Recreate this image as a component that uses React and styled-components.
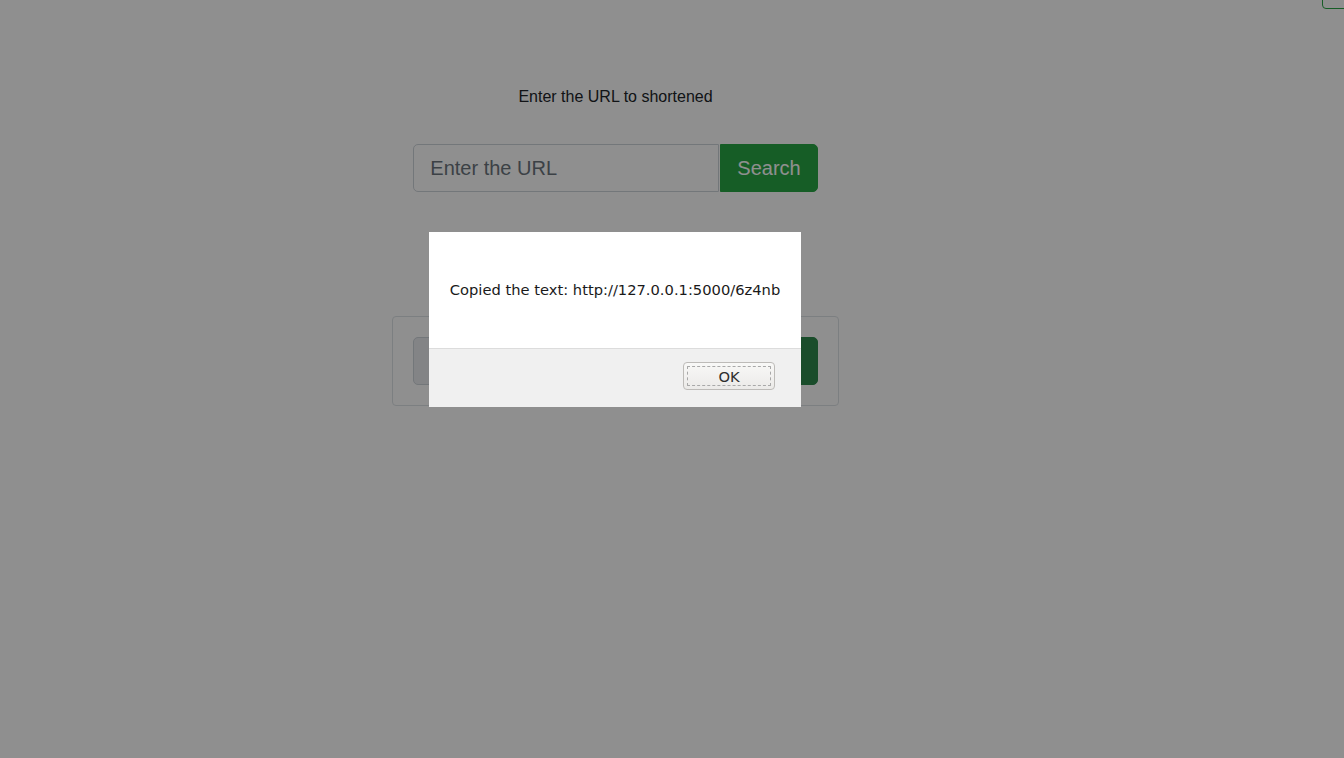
import React from 'react';
import styled, {createGlobalStyle} from 'styled-components';

const GlobalStyle = createGlobalStyle`
  html, body {
    margin: 0;
    padding: 0;
    background: #fff;
    overflow: hidden;
  }
  body {
    font-family: "Liberation Sans", Arial, sans-serif;
    color: #212529;
  }
`;

const Page = styled.div`
  width: 1344px;
  height: 758px;
  position: relative;
  overflow: hidden;
`;

const TopBar = styled.div`
  display: flex;
  justify-content: flex-end;
  height: 0;
`;

const CornerButton = styled.button`
  width: 60px;
  height: 40px;
  margin-top: -31px;
  margin-right: -38px;
  border: 1px solid #28a745;
  border-radius: 4px;
  background: transparent;
`;

const Main = styled.main`
  display: flex;
  flex-direction: column;
  align-items: center;
  padding: 87px 113px 0 0;
`;

const Heading = styled.p`
  margin: 0 0 37px;
  font-size: 16px;
  line-height: 20px;
`;

const InputGroup = styled.div`
  display: flex;
  height: 48px;
`;

const UrlInput = styled.input`
  box-sizing: border-box;
  width: ${p => p.$width}px;
  height: 48px;
  padding: 8px 16px;
  font-family: "Liberation Sans", Arial, sans-serif;
  font-size: 20px;
  color: #495057;
  background: ${p => (p.readOnly ? '#e9ecef' : '#fff')};
  border: 1px solid #ced4da;
  border-radius: 5px 0 0 5px;
  outline: none;

  &::placeholder {
    color: #6c757d;
  }
`;

const GreenButton = styled.button`
  box-sizing: border-box;
  height: 48px;
  padding: 0 ${p => p.$pad || 16}px;
  margin-left: 1px;
  font-family: "Liberation Sans", Arial, sans-serif;
  font-size: 20px;
  color: #fff;
  background: ${p => p.$tone || '#28a745'};
  border: 1px solid ${p => p.$tone || '#28a745'};
  border-radius: 0 5px 5px 0;
`;

const ResultCard = styled.div`
  margin-top: 124px;
  padding: 20px;
  border: 1px solid #dee2e6;
  border-radius: 4px;
`;

const Dim = styled.div`
  position: absolute;
  inset: 0;
  background: rgba(0, 0, 0, 0.44);
`;

const Dialog = styled.div`
  position: absolute;
  left: 429px;
  top: 232px;
  width: 372px;
  display: flex;
  flex-direction: column;
  background: #fff;
  font-family: "DejaVu Sans", sans-serif;
  color: #1a1a1a;
`;

const DialogBody = styled.div`
  height: 116px;
  display: flex;
  align-items: center;
  justify-content: center;
  padding-bottom: 2px;
  font-size: 14.7px;
  box-sizing: border-box;
`;

const DialogFooter = styled.div`
  height: 59px;
  box-sizing: border-box;
  display: flex;
  align-items: flex-start;
  justify-content: flex-end;
  padding: 13px 26px 0 0;
  background: #f0f0f0;
  border-top: 1px solid #dcdcdc;
`;

const OkButton = styled.button`
  position: relative;
  width: 92px;
  height: 28px;
  font-family: "DejaVu Sans", sans-serif;
  font-size: 14.7px;
  color: #2e2e2e;
  background: linear-gradient(#f8f8f7, #ebeae8);
  border: 1px solid #bdbbb8;
  border-radius: 4px;
  padding: 0;

  &::after {
    content: '';
    position: absolute;
    inset: 3px;
    border: 1px dashed #a8a8a8;
    border-radius: 1px;
  }
`;

export default function App() {
  return (
    <Page>
      <GlobalStyle />
      <TopBar>
        <CornerButton aria-label="menu" />
      </TopBar>
      <Main>
        <Heading>Enter the URL to shortened</Heading>
        <InputGroup>
          <UrlInput $width={306} placeholder="Enter the URL" />
          <GreenButton>Search</GreenButton>
        </InputGroup>
        <ResultCard>
          <InputGroup>
            <UrlInput $width={311} readOnly value="http://127.0.0.1:5000/6z4nb" />
            <GreenButton $pad={22} $tone="#2f8a4e">Copy</GreenButton>
          </InputGroup>
        </ResultCard>
      </Main>
      <Dim />
      <Dialog role="alertdialog">
        <DialogBody>Copied the text: http://127.0.0.1:5000/6z4nb</DialogBody>
        <DialogFooter>
          <OkButton>OK</OkButton>
        </DialogFooter>
      </Dialog>
    </Page>
  );
}
